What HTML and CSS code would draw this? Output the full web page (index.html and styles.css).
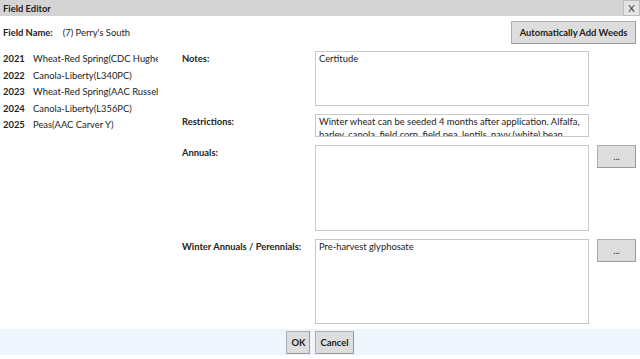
FILE: index.html
```html
<!DOCTYPE html>
<html lang="en">
<head>
    <meta charset="UTF-8">
    <title>Field Editor</title>
    <link rel="stylesheet" href="styles.css">
</head>
<body>
    <div class="titlebar">
        <span class="title">Field Editor</span>
        <button class="close">X</button>
    </div>
    <div class="top-row">
        <div class="field-name"><b>Field Name:</b><span>(7) Perry's South</span></div>
        <button class="btn auto-add">Automatically Add Weeds</button>
    </div>
    <div class="main">
        <ul class="history">
            <li><b>2021</b><span>Wheat-Red Spring(CDC Hughes)</span></li>
            <li><b>2022</b><span>Canola-Liberty(L340PC)</span></li>
            <li><b>2023</b><span>Wheat-Red Spring(AAC Russell)</span></li>
            <li><b>2024</b><span>Canola-Liberty(L356PC)</span></li>
            <li><b>2025</b><span>Peas(AAC Carver Y)</span></li>
        </ul>
        <div class="form">
            <label class="lbl">Notes:</label>
            <div class="box notes">Certitude</div>
            <div></div>

            <label class="lbl">Restrictions:</label>
            <div class="box restrictions">Winter wheat can be seeded 4 months after application. Alfalfa, barley, canola, field corn, field pea, lentils, navy (white) bean, soybean and spring wheat can be seeded the following spring.</div>
            <div></div>

            <label class="lbl">Annuals:</label>
            <div class="box annuals"></div>
            <button class="btn dots">...</button>

            <label class="lbl">Winter Annuals / Perennials:</label>
            <div class="box perennials">Pre-harvest glyphosate</div>
            <button class="btn dots">...</button>
        </div>
    </div>
    <div class="footer">
        <button class="btn">OK</button>
        <button class="btn">Cancel</button>
    </div>
</body>
</html>
```

FILE: styles.css
```css
* {
    box-sizing: border-box;
}
body {
    margin: 0;
    width: 640px;
    height: 359px;
    font-family: Lato, "Noto Sans", sans-serif;
    font-size: 9.4px;
    color: #222222;
    background-color: #ffffff;
    overflow: hidden;
}
.titlebar {
    display: flex;
    justify-content: space-between;
    align-items: center;
    height: 16px;
    background-color: #d4d4d4;
    padding-left: 3px;
}
.title {
    font-weight: bold;
}
.close {
    width: 17px;
    height: 16px;
    padding: 0;
    border: 1px solid #bdbdbd;
    background-color: #e4e4e4;
    font-family: inherit;
    font-size: 10px;
    color: #333333;
}
.top-row {
    display: flex;
    justify-content: space-between;
    align-items: center;
    padding: 4px 4px 0 3px;
    height: 28px;
}
.field-name b {
    margin-right: 10px;
}
.btn {
    font-family: inherit;
    font-weight: bold;
    font-size: 9.4px;
    color: #222222;
    background-color: #dddddd;
    border: 1px solid #adadad;
    border-right-color: #9a9a9a;
    border-bottom-color: #9a9a9a;
    padding: 0 5px;
    height: 23px;
    white-space: nowrap;
}
.auto-add {
    width: 125px;
    padding: 0;
}
.main {
    display: flex;
    padding-top: 7px;
}
.history {
    list-style: none;
    margin: 0;
    padding: 0 0 0 3px;
    width: 182px;
    flex: none;
}
.history li {
    display: flex;
    height: 16.5px;
    line-height: 16px;
    white-space: nowrap;
}
.history b {
    width: 30px;
    flex: none;
}
.history span {
    width: 125px;
    overflow: hidden;
}
.form {
    display: grid;
    grid-template-columns: 125px 274px 39px;
    column-gap: 8px;
    row-gap: 8px;
    align-items: start;
}
.lbl {
    font-weight: bold;
    white-space: nowrap;
    line-height: 14px;
    padding-top: 1px;
}
.box {
    border: 1px solid #c8c8c8;
    background-color: #ffffff;
    padding: 1px 3px;
    line-height: 12.5px;
    overflow: hidden;
}
.notes {
    height: 55px;
}
.restrictions {
    height: 23px;
}
.annuals {
    height: 86px;
}
.perennials {
    height: 85px;
}
.dots {
    width: 39px;
    font-weight: normal;
}
.footer {
    display: flex;
    justify-content: center;
    gap: 5px;
    align-items: center;
    margin-top: 5px;
    height: 26px;
    background-color: #eef5fc;
}
.footer .btn {
    height: 23px;
    padding: 0 4px;
}
```
